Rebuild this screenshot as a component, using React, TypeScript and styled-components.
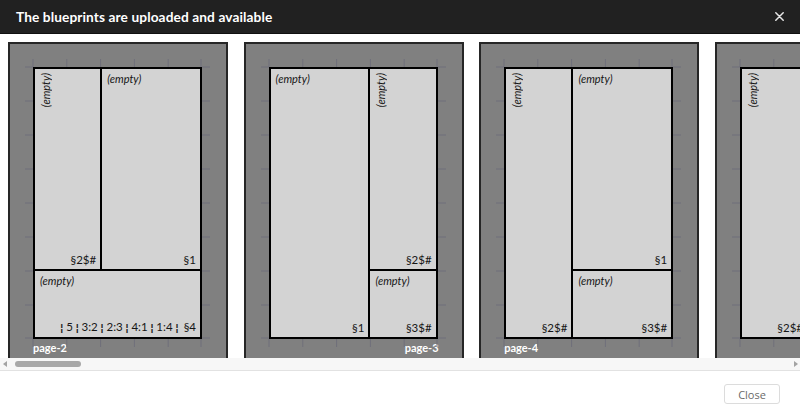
import React from 'react';
import styled, { createGlobalStyle } from 'styled-components';

const GlobalStyle = createGlobalStyle`
  html, body {
    margin: 0;
    padding: 0;
    background: #ffffff;
  }
  body {
    font-family: 'Lato', 'Open Sans', sans-serif;
  }
  * {
    box-sizing: border-box;
  }
`;

type Node =
  | {
      kind: 'panel';
      units: number;
      title?: string;
      vertical?: boolean;
      label?: string[];
    }
  | { kind: 'split'; units: number; dir: 'row' | 'column'; children: Node[] };

interface Page {
  name: string;
  labelSide: 'left' | 'right';
  layout: Node;
}

const PAGES: Page[] = [
  {
    name: 'page-2',
    labelSide: 'left',
    layout: {
      kind: 'split',
      units: 1,
      dir: 'column',
      children: [
        {
          kind: 'split',
          units: 6,
          dir: 'row',
          children: [
            { kind: 'panel', units: 2, title: '(empty)', vertical: true, label: ['§2$#'] },
            { kind: 'panel', units: 3, title: '(empty)', label: ['§1'] },
          ],
        },
        {
          kind: 'panel',
          units: 2,
          title: '(empty)',
          label: ['', ' 5 ', ' 3:2 ', ' 2:3 ', ' 4:1 ', ' 1:4 ', '  §4'],
        },
      ],
    },
  },
  {
    name: 'page-3',
    labelSide: 'right',
    layout: {
      kind: 'split',
      units: 1,
      dir: 'row',
      children: [
        { kind: 'panel', units: 3, title: '(empty)', label: ['§1'] },
        {
          kind: 'split',
          units: 2,
          dir: 'column',
          children: [
            { kind: 'panel', units: 6, title: '(empty)', vertical: true, label: ['§2$#'] },
            { kind: 'panel', units: 2, title: '(empty)', label: ['§3$#'] },
          ],
        },
      ],
    },
  },
  {
    name: 'page-4',
    labelSide: 'left',
    layout: {
      kind: 'split',
      units: 1,
      dir: 'row',
      children: [
        { kind: 'panel', units: 2, title: '(empty)', vertical: true, label: ['§2$#'] },
        {
          kind: 'split',
          units: 3,
          dir: 'column',
          children: [
            { kind: 'panel', units: 6, title: '(empty)', label: ['§1'] },
            { kind: 'panel', units: 2, title: '(empty)', label: ['§3$#'] },
          ],
        },
      ],
    },
  },
  {
    name: 'page-5',
    labelSide: 'right',
    layout: {
      kind: 'split',
      units: 1,
      dir: 'row',
      children: [
        { kind: 'panel', units: 2, title: '(empty)', vertical: true, label: ['§2$#'] },
        {
          kind: 'split',
          units: 3,
          dir: 'column',
          children: [
            { kind: 'panel', units: 6, title: '(empty)', label: ['§1'] },
            { kind: 'panel', units: 2, title: '(empty)', label: ['§3$#'] },
          ],
        },
      ],
    },
  },
];

const PAGE_W = 169;
const PAGE_H = 272;
const PAD = 23;

const Screen = styled.div`
  width: 800px;
  height: 415px;
  display: flex;
  flex-direction: column;
  overflow: hidden;
  background: #ffffff;
`;

const Header = styled.header`
  height: 34px;
  flex: none;
  display: flex;
  align-items: center;
  justify-content: space-between;
  padding: 0 15px 1px 16px;
  background: #212121;
  border-bottom: 1px solid #111111;
`;

const Title = styled.h1`
  margin: 0;
  font-family: 'Lato', sans-serif;
  font-weight: 700;
  font-size: 13.7px;
  color: #ffffff;
  letter-spacing: 0.1px;
`;

const CloseIcon = styled.button`
  width: 12px;
  height: 12px;
  padding: 0;
  border: none;
  background: transparent;
  display: flex;
  align-items: center;
  justify-content: center;
  cursor: pointer;
`;

const Viewport = styled.div`
  height: 324px;
  flex: none;
  overflow: hidden;
  padding: 8px 0 0 8px;
`;

const Strip = styled.div`
  display: flex;
  gap: 15.6px;
  width: max-content;
`;

const Card = styled.div`
  position: relative;
  width: 220px;
  height: 340px;
  flex: none;
  display: flex;
  flex-direction: column;
  padding: ${PAD}px;
  background: #808080;
  border: 2px solid #262626;
`;

const Rulers = styled.svg`
  position: absolute;
  left: 0;
  top: 0;
`;

const Sheet = styled.div`
  position: relative;
  width: ${PAGE_W}px;
  height: ${PAGE_H}px;
  flex: none;
  display: grid;
  border: 2px solid #000000;
  background: #000000;
`;

const Split = styled.div<{ $dir: 'row' | 'column'; $tracks: string }>`
  min-width: 0;
  min-height: 0;
  display: grid;
  gap: 2px;
  ${(p) =>
    p.$dir === 'row'
      ? `grid-template-columns: ${p.$tracks};`
      : `grid-template-rows: ${p.$tracks};`}
`;

const Panel = styled.div`
  min-width: 0;
  min-height: 0;
  display: flex;
  flex-direction: column;
  justify-content: space-between;
  padding: 3px 4px 2px 5px;
  background: #d3d3d3;
  overflow: hidden;
`;

const PanelTitle = styled.span<{ $vertical?: boolean }>`
  align-self: flex-start;
  font-family: 'Lato', sans-serif;
  font-style: italic;
  font-size: 11px;
  line-height: 13px;
  color: #161616;
  white-space: nowrap;
  ${(p) =>
    p.$vertical
      ? `
    writing-mode: vertical-rl;
    transform: rotate(180deg);
    margin-top: 1px;
    margin-left: -1px;
  `
      : ''}
`;

const PanelLabel = styled.span`
  align-self: flex-end;
  font-family: 'Lato', sans-serif;
  font-size: 11.5px;
  line-height: 14px;
  word-spacing: -0.6px;
  color: #161616;
  white-space: pre;
`;

const Sep = styled.span`
  font-family: 'DejaVu Sans', sans-serif;
  font-weight: 700;
  font-size: 11px;
  color: #161616;
`;

const PageName = styled.span<{ $side: 'left' | 'right' }>`
  align-self: ${(p) => (p.$side === 'left' ? 'flex-start' : 'flex-end')};
  margin-top: 2px;
  font-family: 'Lato', sans-serif;
  font-weight: 700;
  font-size: 11px;
  color: #ffffff;
`;

const ScrollBar = styled.div`
  height: 13px;
  flex: none;
  display: flex;
  align-items: center;
  justify-content: space-between;
  padding: 0 2px 1px 3px;
  background: #f7f7f7;
  border-bottom: 1px solid #e2e2e2;
`;

const Arrow = styled.span<{ $dir: 'left' | 'right' }>`
  width: 0;
  height: 0;
  border-top: 3.5px solid transparent;
  border-bottom: 3.5px solid transparent;
  ${(p) =>
    p.$dir === 'left'
      ? 'border-right: 4px solid #a3a3a3;'
      : 'border-left: 4px solid #a3a3a3;'}
`;

const Track = styled.div`
  flex: 1;
  display: flex;
  padding: 0 8px;
`;

const Thumb = styled.div`
  width: 66px;
  height: 6px;
  border-radius: 3px;
  background: #a8a8a8;
`;

const Footer = styled.footer`
  flex: 1;
  display: flex;
  justify-content: flex-end;
  align-items: flex-start;
  padding: 13px 20px 0 0;
`;

const Button = styled.button`
  width: 56px;
  height: 20px;
  padding: 0;
  font-family: 'Open Sans', sans-serif;
  font-size: 11px;
  color: #6a6a6a;
  background: #ffffff;
  border: 1px solid #dcdcdc;
  border-radius: 3px;
`;

const RulerMarks: React.FC = () => {
  const stepX = PAGE_W / 5;
  const stepY = PAGE_H / 8;
  const lines: React.ReactNode[] = [];
  for (let k = 0; k <= 5; k++) {
    const x = PAD + k * stepX - (k === 5 ? 1 : 0);
    lines.push(<line key={`t${k}`} x1={x} y1={PAD - 8} x2={x} y2={PAD} />);
    lines.push(
      <line key={`b${k}`} x1={x} y1={PAD + PAGE_H} x2={x} y2={PAD + PAGE_H + 8} />,
    );
  }
  for (let k = 0; k <= 8; k++) {
    const y = PAD + k * stepY - (k === 8 ? 1 : 0);
    lines.push(<line key={`l${k}`} x1={PAD - 8} y1={y} x2={PAD} y2={y} />);
    lines.push(
      <line key={`r${k}`} x1={PAD + PAGE_W} y1={y} x2={PAD + PAGE_W + 8} y2={y} />,
    );
  }
  return (
    <Rulers width={216} height={336} stroke="#6f6f7a" strokeWidth={1}>
      {lines}
    </Rulers>
  );
};

const LayoutNode: React.FC<{ node: Node }> = ({ node }) => {
  if (node.kind === 'split') {
    const tracks = node.children.map((c) => `minmax(0, ${c.units}fr)`).join(' ');
    return (
      <Split $dir={node.dir} $tracks={tracks}>
        {node.children.map((c, i) => (
          <LayoutNode key={i} node={c} />
        ))}
      </Split>
    );
  }
  return (
    <Panel>
      <PanelTitle $vertical={node.vertical}>{node.title}</PanelTitle>
      {node.label && (
        <PanelLabel>
          {node.label.map((part, i) => (
            <React.Fragment key={i}>
              {i > 0 && <Sep>¦</Sep>}
              {part}
            </React.Fragment>
          ))}
        </PanelLabel>
      )}
    </Panel>
  );
};

const App: React.FC = () => {
  return (
    <Screen>
      <GlobalStyle />
      <Header>
        <Title>The blueprints are uploaded and available</Title>
        <CloseIcon aria-label="close">
          <svg width={9} height={9} viewBox="0 0 9 9">
            <path
              d="M0.8 0.8 L8.2 8.2 M8.2 0.8 L0.8 8.2"
              stroke="#e6e6e6"
              strokeWidth={1.5}
              strokeLinecap="round"
            />
          </svg>
        </CloseIcon>
      </Header>
      <Viewport>
        <Strip>
          {PAGES.map((page) => (
            <Card key={page.name}>
              <RulerMarks />
              <Sheet>
                <LayoutNode node={page.layout} />
              </Sheet>
              <PageName $side={page.labelSide}>{page.name}</PageName>
            </Card>
          ))}
        </Strip>
      </Viewport>
      <ScrollBar>
        <Arrow $dir="left" />
        <Track>
          <Thumb />
        </Track>
        <Arrow $dir="right" />
      </ScrollBar>
      <Footer>
        <Button>Close</Button>
      </Footer>
    </Screen>
  );
};

export default App;
